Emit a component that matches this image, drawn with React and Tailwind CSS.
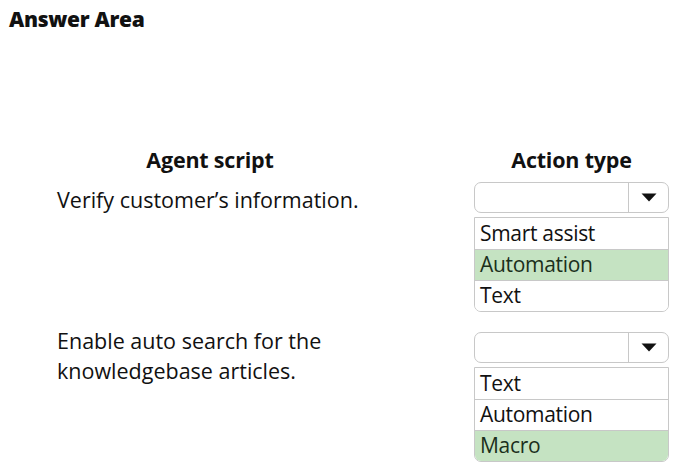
import React from 'react';

const font = { fontFamily: '"Open Sans", "Noto Sans", sans-serif' };

const Caret = () => (
  <svg width="16" height="9" viewBox="0 0 16 9">
    <path d="M0.5 0.5 L15.5 0.5 L8 8.5 Z" fill="#111" />
  </svg>
);

const Dropdown = ({ options, selected }) => (
  <div className="w-[195px]">
    <div className="flex h-[31px] rounded-[7px] border border-[#c8c8c8] bg-white">
      <div className="flex-1 border-r border-[#c8c8c8]"></div>
      <div className="flex w-[39px] items-center justify-center">
        <Caret />
      </div>
    </div>
    <div className="mt-[4px] overflow-hidden rounded-b-[7px] border border-[#c8c8c8]">
      {options.map((opt, i) => (
        <div
          key={opt}
          className={`flex h-[31px] items-center px-[5px] text-[21px] font-medium tracking-[-0.3px] ${
            i > 0 ? 'border-t border-[#c8c8c8]' : ''
          } ${opt === selected ? 'bg-[#c5e3c2] text-[#1b2f1b]' : 'bg-white text-[#111]'}`}
        >
          {opt}
        </div>
      ))}
    </div>
  </div>
);

const App = () => {
  return (
    <div className="h-[475px] w-[682px] bg-white text-[#111]" style={font}>
      <div className="px-[9px] pt-[6px] text-[21px] font-extrabold leading-[26px] tracking-[-0.3px]">Answer Area</div>

      <div className="mt-[114px] flex">
        <div className="ml-[57px] w-[306px] text-center text-[21.5px] font-bold leading-[28px] tracking-[-0.2px]">Agent script</div>
        <div className="ml-[111px] w-[195px] text-center text-[21.5px] font-bold leading-[28px] tracking-[-0.2px]">Action type</div>
      </div>

      <div className="mt-[8px] flex">
        <div className="ml-[57px] w-[306px] pt-[3px] text-[21.5px] font-medium leading-[30px] tracking-[0px]">Verify customer’s information.</div>
        <div className="ml-[111px]">
          <Dropdown options={['Smart assist', 'Automation', 'Text']} selected="Automation" />
        </div>
      </div>

      <div className="mt-[20px] flex">
        <div className="ml-[57px] w-[306px] -mt-[6px] text-[21.5px] font-medium leading-[30px] tracking-[0px]">
          Enable auto search for the
          <br />
          knowledgebase articles.
        </div>
        <div className="ml-[111px]">
          <Dropdown options={['Text', 'Automation', 'Macro']} selected="Macro" />
        </div>
      </div>
    </div>
  );
};

export default App;
